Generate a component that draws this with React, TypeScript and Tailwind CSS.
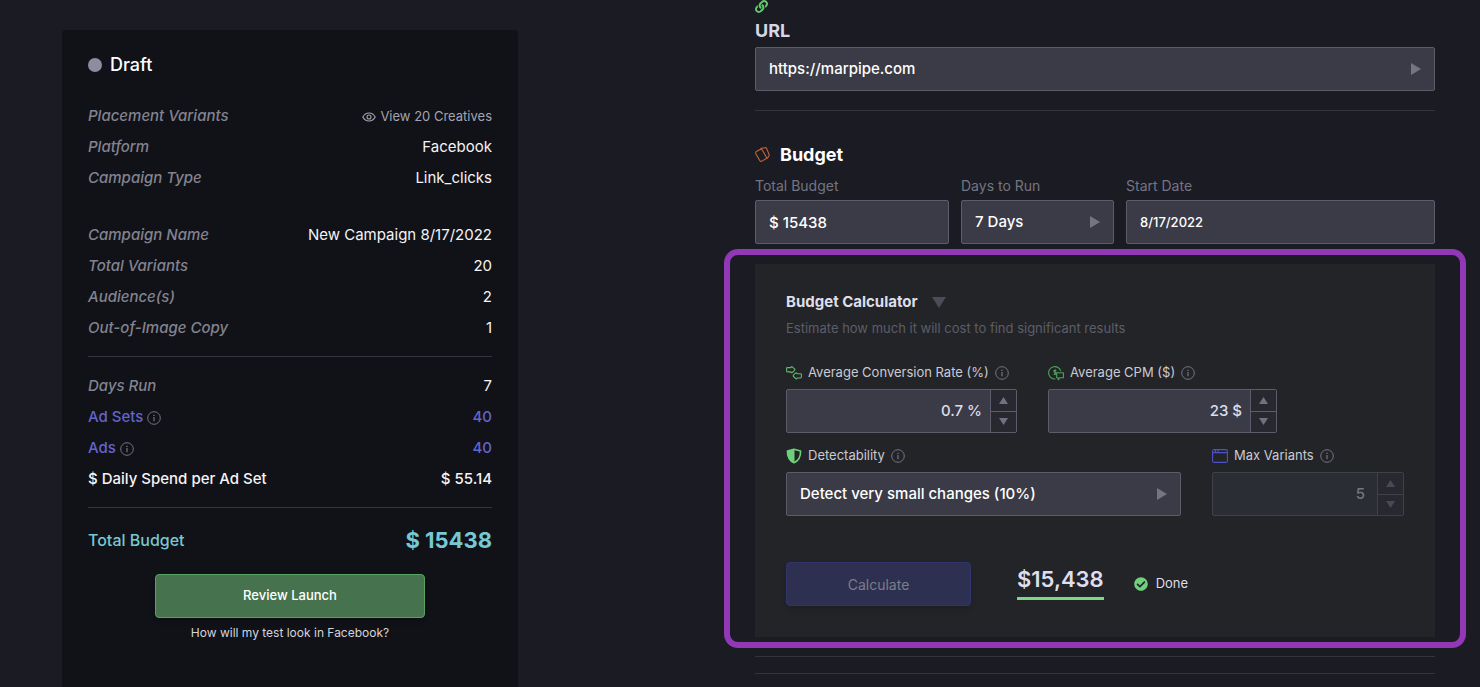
import { useState } from 'react'
import type { ReactNode } from 'react'
import { FaCheckCircle, FaLink } from 'react-icons/fa'

const InfoIcon = () => (
    <svg className="size-[14px] shrink-0 text-[#737483]" viewBox="0 0 14 14" fill="none" stroke="currentColor">
        <circle cx="7" cy="7" r="6.3" />
        <path d="M7 6v4.2" strokeWidth="1.2" />
        <path d="M7 3.7v1.2" strokeWidth="1.3" />
    </svg>
)

const EyeIcon = () => (
    <svg className="h-[10px] w-[14px]" viewBox="0 0 14 10" fill="none" stroke="currentColor" strokeWidth="1.1">
        <path d="M.8 5C2.2 2.4 4.4 1 7 1s4.8 1.4 6.2 4C11.8 7.6 9.600 9 7 9S2.200 7.600.8 5Z" />
        <circle cx="7" cy="5" r="2" />
    </svg>
)

const CardsIcon = () => (
    <svg className="h-4 w-[15px] text-[#c2643c]" viewBox="0 0 15 16" fill="none" stroke="currentColor" strokeWidth="1.1" strokeLinejoin="round">
        <rect x="2.300" y="2.800" width="7.400" height="11" rx="1.600" transform="rotate(-30 6 8.300)" />
        <path d="M5.400 1.500 9.800.7q1.400-.2 1.900 1.100l2.300 5.400q.5 1.200-.3 2.200l-2 2.600" />
    </svg>
)

const ConversionIcon = () => (
    <svg className="h-[14px] w-4 text-[#5fbd68]" viewBox="0 0 16 14" fill="none" stroke="currentColor" strokeWidth="1.100" strokeLinejoin="round">
        <path d="M1.500 1.600H5q.3-1.300 1.200-.8l2.300 2q.8.800 0 1.600L6.200 6.600Q5.200 7.200 5 5.900H1.500q-.9 0-.9-.9V2.500q0-.9.9-.9Z" />
        <path d="M14.500 7.700H11q-.3-1.300-1.200-.8L7.500 8.900q-.8.800 0 1.600l2.300 2.200q1 .6 1.200-.7h3.500q.9 0 .9-.9V8.600q0-.9-.9-.9Z" />
    </svg>
)

const CpmIcon = () => (
    <svg className="h-[15px] w-4 text-[#4fa25a]" viewBox="0 0 16 15" fill="none" stroke="currentColor" strokeWidth="1.100">
        <path d="M12.800 5.200A6.200 6.200 0 1 0 7.400 13" />
        <path d="M8.400 4.600c-.5-.6-2.600-.6-2.600.6 0 1.400 2.700.8 2.700 2.200 0 1.200-2.200 1.200-2.800.4M7.100 3.300v5.800" />
        <path d="M8.700 6.800h6.700v5h-3.600l-1.600 2v-2H8.700Z" strokeLinejoin="round" />
    </svg>
)

const ShieldIcon = () => (
    <svg className="size-4 text-[#6fcf7a]" viewBox="0 0 16 16" fill="none" stroke="currentColor">
        <path d="M8 1.200 14.600 3c.1 5.600-1.700 9.600-6.600 11.800C3.100 12.600 1.300 8.600 1.400 3Z" strokeWidth="1.600" strokeLinejoin="round" />
        <path d="M8.500 1.200V14.800C3.100 12.600 1.300 8.600 1.400 3Z" fill="currentColor" stroke="none" />
    </svg>
)

const WindowIcon = () => (
    <svg className="h-[14px] w-4 text-[#4e50c4]" viewBox="0 0 16 14" fill="none" stroke="currentColor" strokeWidth="1.100">
        <rect x=".6" y=".6" width="14.800" height="12.800" rx="1.500" />
        <path d="M.6 3.600h14.800M3.400.6v3M6 .6v3" />
    </svg>
)

const Row = ({ label, value, className = '' }: { label: ReactNode; value: ReactNode; className?: string }) => (
    <div className={`flex h-[31px] items-center justify-between text-[15px] ${className}`}>
        <dt className="flex items-center gap-1">{label}</dt>
        <dd>{value}</dd>
    </div>
)

const Muted = ({ children }: { children: ReactNode }) => (
    <span className="font-medium text-[#82838f] italic">{children}</span>
)

const fieldBox = 'h-11 w-full rounded-[2px] border border-[#5c5d6b] bg-[#3a3b46] px-[13px] outline-none'

const fieldLabel = 'mb-1 block text-[14px] leading-5 text-[#747582]'

const SelectBox = ({ id, options }: { id: string; options: string[] }) => (
    <div className="relative">
        <select id={id} className={`${fieldBox} appearance-none text-[15px] font-medium text-white`}>
            {options.map((option) => <option key={option}>{option}</option>)}
        </select>
        <svg className="pointer-events-none absolute top-4 right-[14px] h-3 w-[10px] text-[#747584]" viewBox="0 0 10 12" fill="currentColor">
            <path d="M0 0l10 6-10 6z" />
        </svg>
    </div>
)

const CalcLabel = ({ id, icon, children }: { id: string; icon: ReactNode; children: ReactNode }) => (
    <div className="mb-[6px] flex h-5 items-center gap-[6px]">
        {icon}
        <label htmlFor={id} className="text-[13px] text-[#c9cad4]">{children}</label>
        <InfoIcon />
    </div>
)

type StepperProps = { id: string; start: number; step: number; unit?: string; disabled?: boolean }

const Stepper = ({ id, start, step, unit = '', disabled = false }: StepperProps) => {
    const [value, setValue] = useState(start)

    const change = (amount: number) => {
        setValue(Math.max(0, Math.round((value + amount) * 10) / 10))
    }

    return (
        <div className={`flex h-11 rounded-[2px] border ${disabled ? 'border-[#3f4048] bg-[#2b2d35]' : 'border-[#5c5d6b] bg-[#3a3b46]'}`}>
            <input
                id={id}
                type="text"
                disabled={disabled}
                className={`min-w-0 flex-1 bg-transparent text-right text-[15px] font-medium outline-none ${disabled ? 'pr-3 text-[#74757f]' : 'pr-2 text-[#dcdde8]'}`}
                value={`${value}${unit}`}
                onChange={(e) => setValue(parseFloat(e.target.value) || 0)} />
            <div className={`flex w-[26px] flex-col divide-y border-l bg-[#272830] ${disabled ? 'divide-[#3f4048] border-[#3f4048] text-[#484952]' : 'divide-[#5c5d6b] border-[#5c5d6b] text-[#717281]'}`}>
                <button type="button" aria-label="Increase" disabled={disabled} className="flex flex-1 items-center justify-center" onClick={() => change(step)}>
                    <svg className="h-[7px] w-[9px]" viewBox="0 0 9 7" fill="currentColor"><path d="M4.500 0 9 7H0z" /></svg>
                </button>
                <button type="button" aria-label="Decrease" disabled={disabled} className="flex flex-1 items-center justify-center" onClick={() => change(-step)}>
                    <svg className="h-[7px] w-[9px]" viewBox="0 0 9 7" fill="currentColor"><path d="M0 0h9L4.500 7z" /></svg>
                </button>
            </div>
        </div>
    )
}

const Summary = () => (
    <aside className="w-[456px] shrink-0 rounded-t-[4px] bg-[#111118] px-[26px] pt-[21px] text-[#f4f4f6]">
        <h2 className="flex h-7 items-center gap-2 text-lg font-medium text-white">
            <span className="size-[14px] rounded-full bg-[#8d8da1]"></span>
            Draft
        </h2>
        <dl className="mt-[22px]">
            <Row
                label={<Muted>Placement Variants</Muted>}
                value={<button type="button" className="flex items-center gap-1 text-[13px] text-[#a3a4b0]"><EyeIcon />View 20 Creatives</button>} />
            <Row label={<Muted>Platform</Muted>} value="Facebook" />
            <Row label={<Muted>Campaign Type</Muted>} value="Link_clicks" />
        </dl>
        <dl className="mt-[26px]">
            <Row label={<Muted>Campaign Name</Muted>} value="New Campaign 8/17/2022" />
            <Row label={<Muted>Total Variants</Muted>} value="20" />
            <Row label={<Muted>Audience(s)</Muted>} value="2" />
            <Row label={<Muted>Out-of-Image Copy</Muted>} value="1" />
        </dl>
        <hr className="mt-3 mb-[14px] border-[#33343f]" />
        <dl>
            <Row label={<Muted>Days Run</Muted>} value="7" />
            <Row className="font-medium text-[#6464cc]" label={<>Ad Sets <InfoIcon /></>} value="40" />
            <Row className="font-medium text-[#6464cc]" label={<>Ads <InfoIcon /></>} value="40" />
            <Row className="font-medium" label="$ Daily Spend per Ad Set" value="$ 55.14" />
        </dl>
        <hr className="mt-3 border-[#33343f]" />
        <div className="mt-4 flex h-8 items-center justify-between text-[#76c8d2]">
            <span className="text-[16px] font-medium">Total Budget</span>
            <span className="text-[22px] font-bold">$ 15438</span>
        </div>
        <div className="mt-[18px] flex flex-col items-center">
            <button type="button" className="h-11 w-2/3 rounded-[4px] border border-[#57a263] bg-[#46734d] text-[13px] font-medium text-white shadow-md">Review Launch</button>
            <a href="#" className="mt-1 text-[12px] leading-[22px] text-[#d3d4de]">How will my test look in Facebook?</a>
        </div>
    </aside>
)

const BudgetCalculator = () => (
    <section className="-mx-[31px] mt-[5px] rounded-[14px] border-[6px] border-[#9238b6] px-[25px] pt-[9px] pb-[5px]">
        <div className="bg-[#232428] px-[31px] pt-[26px] pb-[31px]">
            <h3 className="flex items-center gap-[14px] text-[15px] leading-6 font-bold text-[#dedfe9]">
                Budget Calculator
                <svg className="h-[11px] w-[14px] text-[#4b4c58]" viewBox="0 0 14 11" fill="currentColor"><path d="M0 0h14L7 11z" /></svg>
            </h3>
            <p className="mt-1 text-[13px] leading-5 text-[#5c5d69]">Estimate how much it will cost to find significant results</p>

            <div className="mt-[25px] flex gap-[31px]">
                <div className="w-[231px]">
                    <CalcLabel id="rate" icon={<ConversionIcon />}>Average Conversion Rate (%)</CalcLabel>
                    <Stepper id="rate" start={0.7} step={0.1} unit=" %" />
                </div>
                <div className="w-[229px]">
                    <CalcLabel id="cpm" icon={<CpmIcon />}>Average CPM ($)</CalcLabel>
                    <Stepper id="cpm" start={23} step={1} unit=" $" />
                </div>
            </div>
            <div className="mt-[13px] flex gap-[31px]">
                <div className="flex-1">
                    <CalcLabel id="detect" icon={<ShieldIcon />}>Detectability</CalcLabel>
                    <SelectBox id="detect" options={['Detect very small changes (10%)']} />
                </div>
                <div className="w-[192px]">
                    <CalcLabel id="variants" icon={<WindowIcon />}>Max Variants</CalcLabel>
                    <Stepper id="variants" start={5} step={1} disabled />
                </div>
            </div>

            <div className="mt-[46px] flex h-11 items-center">
                <button type="button" disabled className="h-11 w-[185px] rounded-[4px] border border-[#32356b] bg-[#2e3051] text-[14px] text-[#7c7d88] shadow-md">Calculate</button>
                <output className="mb-px ml-[46px] border-b-[3px] border-[#7bd885] pb-[6px] text-[22px] leading-6 font-semibold text-[#dedfee]">$15,438</output>
                <span className="ml-[30px] flex items-center gap-2 text-[13px] text-[#dedfe9]">
                    <FaCheckCircle className="size-[14px] text-[#71cf7c]" />
                    Done
                </span>
            </div>
        </div>
    </section>
)

const App = () => {
    const [budget, setBudget] = useState('$ 15438')
    const [startDate, setStartDate] = useState('8/17/2022')

    return (
        <div className="flex min-h-screen justify-between gap-10 bg-[#1b1b23] pr-[45px] pl-[62px] font-['Inter',sans-serif]">
            <div className="flex pt-[30px]">
                <Summary />
            </div>

            <main className="max-w-[680px] flex-1">
                <FaLink className="size-[13px] text-[#63c96c]" />
                <label htmlFor="url" className="mt-[6px] mb-1 block text-lg leading-6 font-bold text-[#d6d7e4]">URL</label>
                <SelectBox id="url" options={['https://marpipe.com']} />
                <hr className="mt-[19px] border-[#33343f]" />

                <h2 className="mt-8 flex items-center gap-[10px] text-lg leading-6 font-bold text-white">
                    <CardsIcon />
                    Budget
                </h2>
                <div className="mt-[9px] flex gap-3">
                    <div className="w-[194px]">
                        <label htmlFor="budget" className={fieldLabel}>Total Budget</label>
                        <input id="budget" type="text" className={`${fieldBox} text-[15px] font-medium text-white`} value={budget} onChange={(e) => setBudget(e.target.value)} />
                    </div>
                    <div className="w-[153px]">
                        <label htmlFor="days" className={fieldLabel}>Days to Run</label>
                        <SelectBox id="days" options={['7 Days']} />
                    </div>
                    <div className="flex-1">
                        <label htmlFor="start" className={fieldLabel}>Start Date</label>
                        <input id="start" type="text" className={`${fieldBox} text-[13px] font-medium text-white`} value={startDate} onChange={(e) => setStartDate(e.target.value)} />
                    </div>
                </div>

                <BudgetCalculator />
                <hr className="mt-2 border-[#33343f]" />
                <hr className="mt-4 border-[#33343f]" />
            </main>
        </div>
    )
}

export default App
